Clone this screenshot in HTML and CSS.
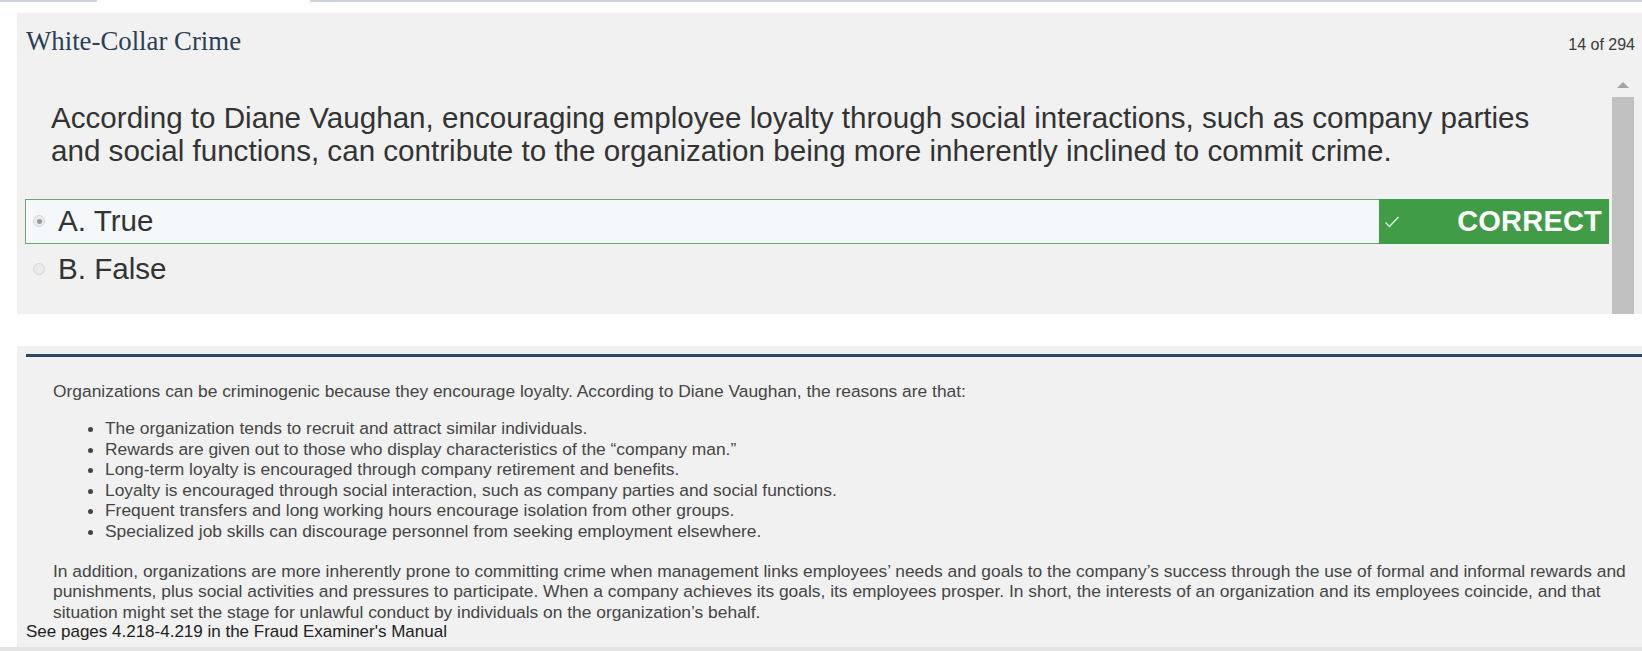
FILE: index.html
```html
<!DOCTYPE html>
<html>
<head>
<meta charset="utf-8">
<link rel="stylesheet" href="styles.css">
</head>
<body>
<div class="tabline"><span class="seg seg-a"></span><span class="seg-gap"></span><span class="seg seg-b"></span></div>

<section class="qpanel">
  <header class="qhead">
    <h1 class="qtitle">White-Collar Crime</h1>
    <span class="qcount">14 of 294</span>
  </header>
  <div class="qbody">
    <div class="qcontent">
      <p class="qtext">According to Diane Vaughan, encouraging employee loyalty through social interactions, such as company parties and social functions, can contribute to the organization being more inherently inclined to commit crime.</p>
      <ul class="options">
        <li class="option option-correct">
          <div class="opt-label"><span class="radio radio-on"></span><span class="opt-text">A. True</span></div>
          <div class="badge">
            <svg class="check" width="16" height="12" viewBox="0 0 16 12"><polyline points="1.5,6.5 5.5,10.5 14.5,1" fill="none" stroke="#dff0df" stroke-width="1.4"/></svg>
            <span class="badge-text">CORRECT</span>
          </div>
        </li>
        <li class="option">
          <div class="opt-label"><span class="radio"></span><span class="opt-text">B. False</span></div>
        </li>
      </ul>
    </div>
    <div class="scrollbar">
      <div class="sb-arrow"></div>
      <div class="sb-thumb"></div>
    </div>
  </div>
</section>

<section class="explain">
  <div class="explain-inner">
    <p class="ex-p ex-first">Organizations can be criminogenic because they encourage loyalty. According to Diane Vaughan, the reasons are that:</p>
    <ul class="ex-list">
      <li>The organization tends to recruit and attract similar individuals.</li>
      <li>Rewards are given out to those who display characteristics of the “company man.”</li>
      <li>Long-term loyalty is encouraged through company retirement and benefits.</li>
      <li>Loyalty is encouraged through social interaction, such as company parties and social functions.</li>
      <li>Frequent transfers and long working hours encourage isolation from other groups.</li>
      <li>Specialized job skills can discourage personnel from seeking employment elsewhere.</li>
    </ul>
    <p class="ex-p ex-last">In addition, organizations are more inherently prone to committing crime when management links employees’ needs and goals to the company’s success through the use of formal and informal rewards and punishments, plus social activities and pressures to participate. When a company achieves its goals, its employees prosper. In short, the interests of an organization and its employees coincide, and that situation might set the stage for unlawful conduct by individuals on the organization’s behalf.</p>
  </div>
  <p class="ref">See pages 4.218-4.219 in the Fraud Examiner's Manual</p>
</section>
<div class="footstrip"></div>
</body>
</html>
```

FILE: styles.css
```css
* { box-sizing: border-box; }
html, body { margin: 0; padding: 0; background: #ffffff; }
body { width: 1642px; height: 651px; overflow: hidden; font-family: "Liberation Sans", Arial, sans-serif; }

.tabline { display: flex; height: 2px; }
.seg { display: block; height: 2px; background: #cdd2de; }
.seg-a { width: 97px; }
.seg-gap { width: 213px; }
.seg-b { flex: 1; }

.qpanel {
  margin: 11px 0 0 17px;
  height: 301px;
  background: #f1f1f1;
  padding: 13px 7px 0 8px;
  display: flex;
  flex-direction: column;
}
.qhead { display: flex; align-items: baseline; justify-content: space-between; height: 30px; }
.qtitle {
  margin: 0 0 0 1px;
  font-family: "Liberation Serif", Georgia, serif;
  font-weight: normal;
  font-size: 26.8px;
  line-height: 30px;
  color: #2b3f56;
}
.qcount { font-size: 16px; color: #3a3a3a; }

.qbody { display: flex; flex: 1; margin-top: 14px; }
.qcontent { flex: 1; padding-top: 31px; }
.qtext {
  margin: 0 0 0 26px;
  padding-right: 40px;
  font-size: 29.6px;
  line-height: 33.4px;
  color: #333333;
}
.options { list-style: none; margin: 31px 2px 0 0; padding: 0; }
.option { display: flex; height: 45px; margin-bottom: 3px; }
.opt-label {
  flex: 1;
  display: flex;
  align-items: center;
  padding-left: 7px;
  border: 1px solid transparent;
}
.option-correct .opt-label { border-color: #6aa86e; border-right: none; background: #f5f8fa; }
.radio {
  width: 12px; height: 12px; border-radius: 50%;
  border: 1px solid #d6d6d6;
  background: #ebebeb;
  margin-right: 13px;
  display: flex; align-items: center; justify-content: center;
}
.radio-on::after { content: ""; width: 5px; height: 5px; border-radius: 50%; background: #9a9a9a; }
.opt-text { font-size: 29.6px; color: #333333; }
.badge {
  width: 230px;
  background: #409c46;
  color: #ffffff;
  display: flex; align-items: center; justify-content: space-between;
  padding: 0 7px 0 5px;
}
.check { display: block; margin-top: 2px; }
.badge-text { font-size: 29px; font-weight: bold; letter-spacing: 0.2px; }

.scrollbar { width: 24px; display: flex; flex-direction: column; align-items: center; }
.sb-arrow {
  margin-top: 12px;
  width: 0; height: 0;
  border-left: 6px solid transparent; border-right: 6px solid transparent;
  border-bottom: 6px solid #a3a3a3;
}
.sb-thumb { margin-top: 9px; width: 22px; flex: 1; background: #c1c1c1; }

.explain {
  margin: 32px 0 0 17px;
  height: 301px;
  background: #f1f1f1;
  padding-top: 8px;
  overflow: hidden;
  font-size: 17.4px;
  line-height: 20.5px;
}
.explain-inner { margin-left: 9px; border-top: 3px solid #2c4763; padding: 24px 0 0 27px; color: #454545; }
.ex-p { margin: 0; padding-right: 6px; }
.ex-list { margin: 16.5px 0 19.5px 0; padding-left: 52px; }
.ref { margin: 0 0 0 9px; font-size: 17px; color: #222222; }

.footstrip { height: 4px; background: #e4e4e4; }
```
